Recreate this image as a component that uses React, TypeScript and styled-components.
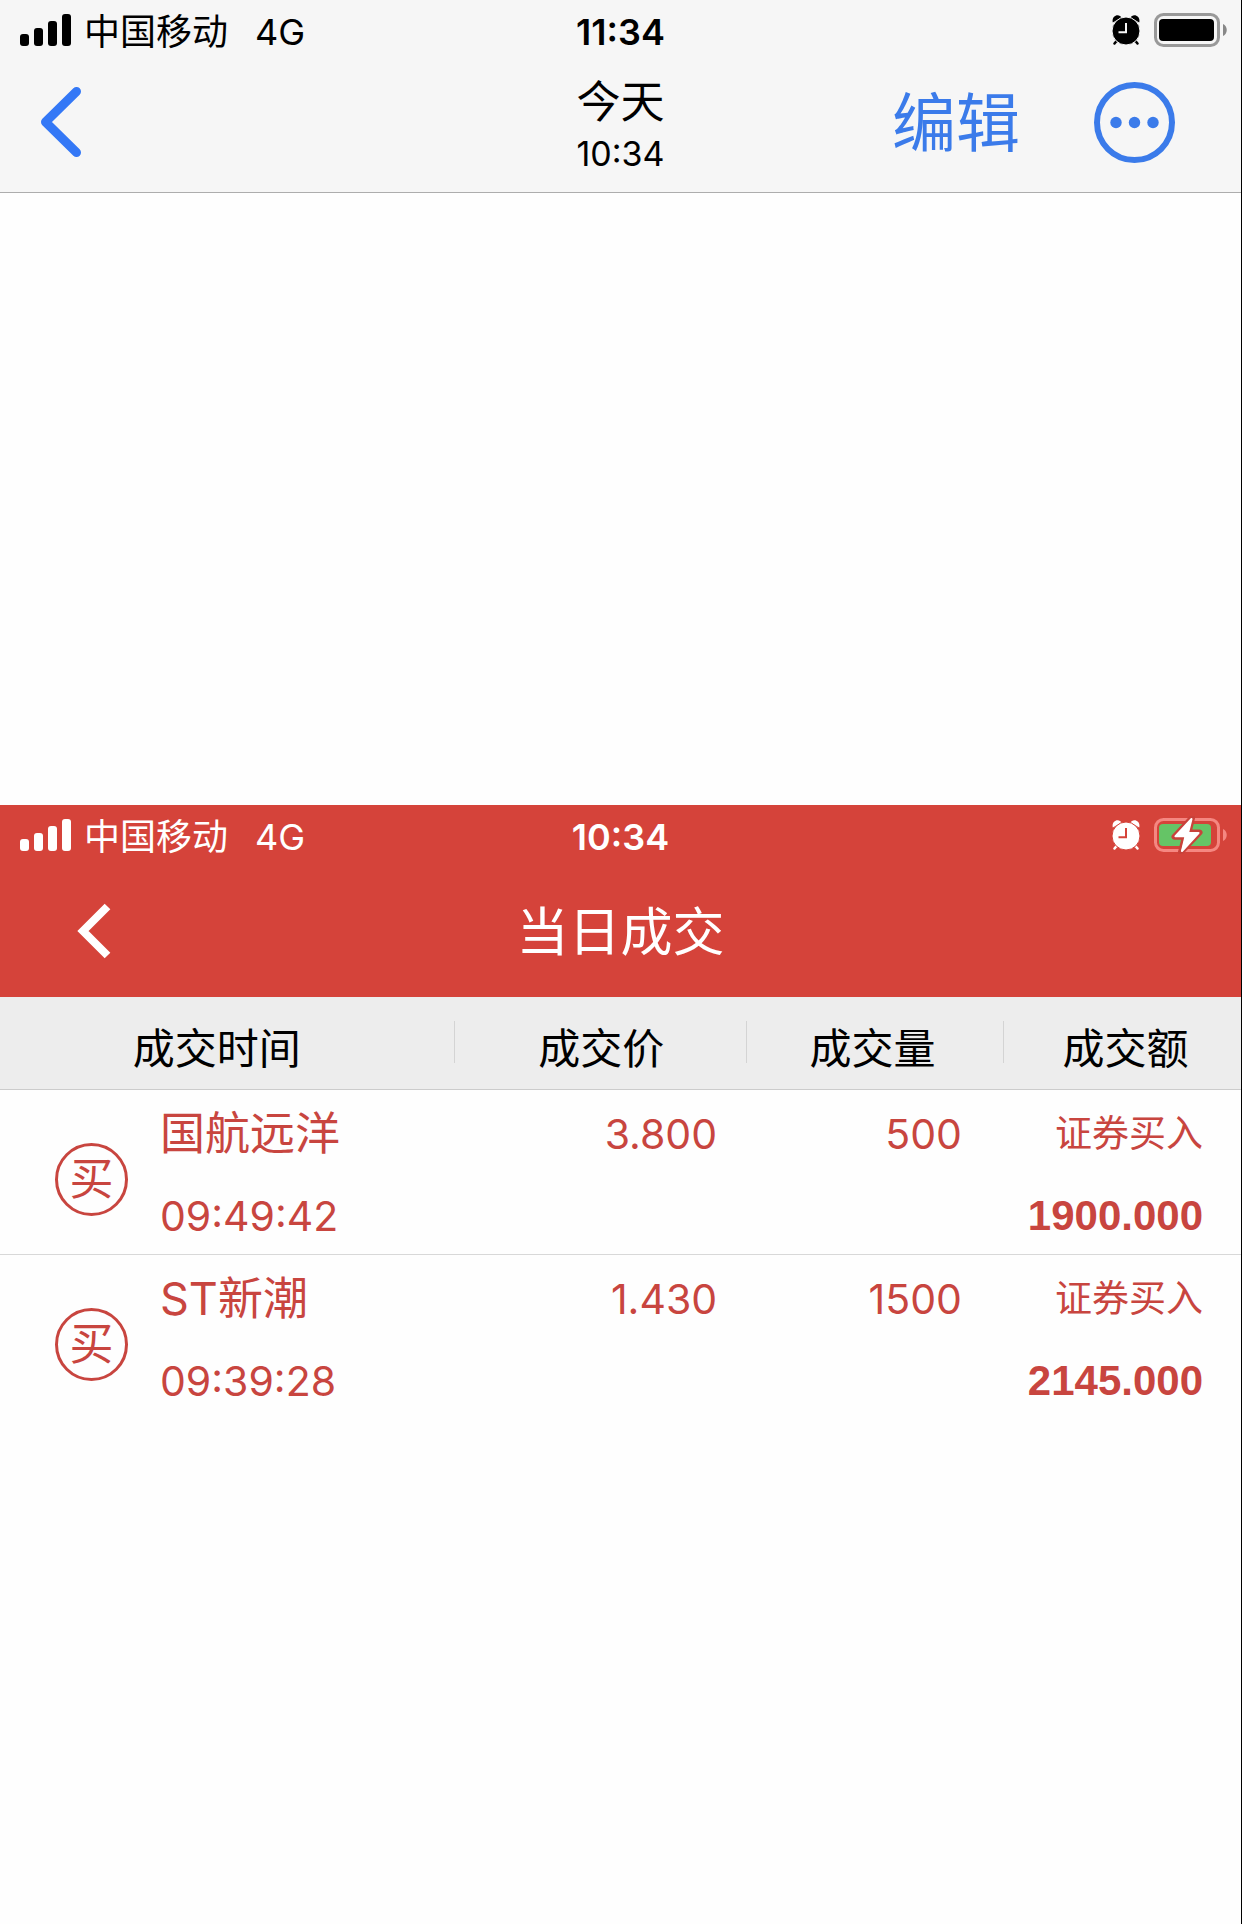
import React from "react";
import styled, { createGlobalStyle } from "styled-components";

const GlobalStyle = createGlobalStyle`
  *, *::before, *::after { box-sizing: border-box; }
  body {
    margin: 0;
    background: #fefefe;
    color: #000;
    font-family: Inter, "Noto Sans CJK SC", sans-serif;
  }
  h1, h2, p { margin: 0; font-weight: 400; }
`;

const Page = styled.main`
  min-height: 100vh;
  border-right: 1px solid #000;
`;

const TopSection = styled.header<{ $tone: "light" | "red" }>`
  display: flex;
  flex-direction: column;
  background: ${(p) => (p.$tone === "red" ? "#d5433a" : "#f6f6f6")};
  color: ${(p) => (p.$tone === "red" ? "#fff" : "#000")};
  border-bottom: ${(p) => (p.$tone === "red" ? "0" : "1px solid #adadad")};
`;

const StatusRow = styled.div`
  display: grid;
  grid-template-columns: 1fr auto 1fr;
  align-items: center;
  height: 60px;
  font-size: 36px;
  line-height: 56px;
`;

const Carrier = styled.div`
  display: flex;
  align-items: center;
  gap: 12px;
  padding-left: 19px;
`;

const StatusText = styled.span`
  padding-top: 4px;
`;

const Network = styled(StatusText)`
  margin-left: 15px;
`;

const Clock = styled(StatusText)`
  font-weight: 600;
`;

const StatusIcons = styled.div`
  display: flex;
  align-items: center;
  justify-content: flex-end;
  gap: 14px;
  padding-right: 13px;
`;

const NavRow = styled.nav<{ $bottom: number }>`
  display: grid;
  grid-template-columns: 1fr auto 1fr;
  align-items: center;
  height: 132px;
  padding-bottom: ${(p) => p.$bottom}px;
`;

const IconButton = styled.button`
  display: flex;
  padding: 0;
  border: 0;
  background: none;
  color: inherit;
  cursor: pointer;
`;

const BackButton = styled(IconButton)<{ $inset: number }>`
  justify-self: start;
  margin-left: ${(p) => p.$inset}px;
`;

const BlueButton = styled(IconButton)`
  color: #3b7bea;
`;

const NoteTitle = styled.h1`
  display: flex;
  flex-direction: column;
  align-items: center;
  padding-top: 8px;
  font-size: 44px;
  line-height: 56px;
`;

const NoteTime = styled.time`
  font-size: 34px;
  line-height: 48px;
`;

const NavActions = styled.div`
  display: flex;
  align-items: center;
  justify-content: flex-end;
  gap: 74px;
  padding-right: 66px;
`;

const EditButton = styled(BlueButton)`
  padding-top: 2px;
  font: inherit;
  font-size: 64px;
  line-height: 80px;
`;

const NoteSpace = styled.section`
  height: 612px;
`;

const ScreenTitle = styled.h2`
  padding-top: 4px;
  font-size: 52px;
  line-height: 80px;
`;

const Trades = styled.table`
  width: 100%;
  table-layout: fixed;
  border-collapse: separate;
  border-spacing: 0;
`;

const HeadCell = styled.th<{ $width: string; $last?: boolean; $pad?: string }>`
  width: ${(p) => p.$width};
  height: 93px;
  padding: ${(p) => p.$pad ?? "12px 0 0"};
  border-bottom: 1px solid #ccc;
  background: #ededed
    ${(p) =>
      p.$last
        ? ""
        : "linear-gradient(#d4d4d4, #d4d4d4) right 24px / 1px 42px no-repeat"};
  font-size: 42px;
  font-weight: 400;
  line-height: 60px;
`;

const TradeRow = styled.tr`
  color: #c8453f;
  &:not(:last-child) td { border-bottom: 1px solid #d8d8d8; }
`;

const Cell = styled.td<{ $right: number }>`
  height: 165px;
  padding: 9px ${(p) => p.$right}px 0 0;
  vertical-align: top;
  text-align: right;
  font-size: 41px;
  line-height: 70px;
`;

const StockCell = styled(Cell)`
  text-align: left;
`;

const Stock = styled.div`
  display: flex;
  align-items: center;
  gap: 32px;
  padding-left: 55px;
`;

const Lines = styled.div`
  display: flex;
  flex-direction: column;
  gap: 12px;
`;

const Badge = styled.span`
  flex: none;
  display: flex;
  align-items: center;
  justify-content: center;
  width: 73px;
  height: 73px;
  margin-top: 8px;
  border: 3px solid currentColor;
  border-radius: 50%;
  font-size: 44px;
  line-height: 60px;
`;

const StockName = styled.div`
  font-size: 45px;
`;

const Kind = styled.div`
  font-size: 37px;
`;

const Amount = styled.div`
  font-family: "Liberation Sans", Arial, sans-serif;
  font-size: 42px;
  font-weight: 700;
`;

const SignalIcon = () => (
  <svg width="53" height="34" viewBox="0 0 53 34" fill="currentColor" aria-hidden="true">
    <rect x="1" y="21" width="9" height="12" rx="3" />
    <rect x="15" y="15" width="9" height="18" rx="3" />
    <rect x="29" y="8" width="9" height="25" rx="3" />
    <rect x="43" y="1" width="9" height="32" rx="3" />
  </svg>
);

const AlarmIcon = ({ hand }: { hand: string }) => (
  <svg width="28" height="30" viewBox="0 0 28 30" aria-hidden="true">
    <path d="M5 25.500 2.500 28.500M23 25.500 25.500 28.500" stroke="currentColor" strokeWidth="2.500" strokeLinecap="round" />
    <g fill="currentColor">
      <path d="M.8 7.500C-.3 3.500 2.500.3 5.500.3 7.500.3 8.800 1.300 9.200 2.500Z" />
      <path d="M27.200 7.500C28.300 3.500 25.500.3 22.500.3 20.500.3 19.200 1.300 18.800 2.500Z" />
      <circle cx="14" cy="16" r="14" stroke={hand} strokeWidth="1" />
    </g>
    <path d="M14 8V17.200H6.500" fill="none" stroke={hand} strokeWidth="2" />
  </svg>
);

const Battery = () => (
  <svg width="74" height="38" viewBox="0 0 74 38" aria-label="电池">
    <rect x="1.500" y="3.500" width="63" height="31" rx="8" fill="none" stroke="#999" strokeWidth="3" />
    <path d="M69 13c5 2 5 10 0 12Z" fill="#888" />
    <rect x="5" y="8" width="55" height="22" rx="4" fill="#000" />
  </svg>
);

const ChargingBattery = () => (
  <svg width="74" height="38" viewBox="0 0 74 38" aria-label="正在充电">
    <rect x="1.500" y="3.500" width="63" height="31" rx="8" fill="none" stroke="#f58781" strokeWidth="3" />
    <path d="M69 13c5 2 5 10 0 12Z" fill="#f58781" />
    <rect x="5" y="8" width="52" height="22" rx="4" fill="#65c466" />
    <path
      d="M38 2 20.500 20.800H31L27 36 45.500 16.500H34.500Z"
      fill="#fff"
      stroke="#c9423a"
      strokeWidth="6"
      strokeLinejoin="round"
      paintOrder="stroke"
    />
    <path d="M37.500 3 21.500 20.300H31.500L28 35 44.500 17H34Z" fill="#fff" stroke="#fff" strokeWidth="2" strokeLinejoin="round" />
  </svg>
);

const RoundChevron = () => (
  <svg width="42" height="72" viewBox="0 0 42 72" fill="none" aria-hidden="true">
    <path d="M36.500 5.500 5.500 36 36.500 66.500" stroke="#3478f6" strokeWidth="9" strokeLinecap="round" strokeLinejoin="round" />
  </svg>
);

const SharpChevron = () => (
  <svg width="34" height="56" viewBox="0 0 34 56" fill="none" aria-hidden="true">
    <path d="M30.500 3.500 6 28 30.500 52.500" stroke="currentColor" strokeWidth="8" />
  </svg>
);

const MoreIcon = () => (
  <svg width="81" height="81" viewBox="0 0 81 81" fill="currentColor" aria-hidden="true">
    <circle cx="40.500" cy="40.500" r="37.500" fill="none" stroke="currentColor" strokeWidth="6" />
    <circle cx="22" cy="40.500" r="5.700" />
    <circle cx="40.500" cy="40.500" r="5.700" />
    <circle cx="59" cy="40.500" r="5.700" />
  </svg>
);

type StatusProps = { time: string; hand: string; charging?: boolean };

const StatusBar = ({ time, hand, charging }: StatusProps) => (
  <StatusRow>
    <Carrier>
      <SignalIcon />
      <StatusText>中国移动</StatusText>
      <Network>4G</Network>
    </Carrier>
    <Clock as="time">{time}</Clock>
    <StatusIcons>
      <AlarmIcon hand={hand} />
      {charging ? <ChargingBattery /> : <Battery />}
    </StatusIcons>
  </StatusRow>
);

const trades = [
  { name: "国航远洋", time: "09:49:42", price: "3.800", volume: "500", kind: "证券买入", amount: "1900.000" },
  { name: "ST新潮", time: "09:39:28", price: "1.430", volume: "1500", kind: "证券买入", amount: "2145.000" },
];

export default function App() {
  return (
    <Page>
      <GlobalStyle />
      <TopSection $tone="light">
        <StatusBar time="11:34" hand="#f6f6f6" />
        <NavRow $bottom={8}>
          <BackButton $inset={40} aria-label="返回">
            <RoundChevron />
          </BackButton>
          <NoteTitle>
            今天
            <NoteTime>10:34</NoteTime>
          </NoteTitle>
          <NavActions>
            <EditButton>编辑</EditButton>
            <BlueButton aria-label="更多">
              <MoreIcon />
            </BlueButton>
          </NavActions>
        </NavRow>
      </TopSection>
      <NoteSpace />
      <TopSection $tone="red">
        <StatusBar time="10:34" hand="#d5433a" charging />
        <NavRow $bottom={0}>
          <BackButton $inset={77} aria-label="返回">
            <SharpChevron />
          </BackButton>
          <ScreenTitle>当日成交</ScreenTitle>
        </NavRow>
      </TopSection>
      <Trades>
        <thead>
          <tr>
            <HeadCell $width="36.7%" $pad="12px 22px 0 0">成交时间</HeadCell>
            <HeadCell $width="23.5%">成交价</HeadCell>
            <HeadCell $width="20.7%" $pad="12px 6px 0 0">成交量</HeadCell>
            <HeadCell $width="19.1%" $pad="12px 0 0 6px" $last>成交额</HeadCell>
          </tr>
        </thead>
        <tbody>
          {trades.map((t) => (
            <TradeRow key={t.time}>
              <StockCell $right={0}>
                <Stock>
                  <Badge>买</Badge>
                  <Lines>
                    <StockName>{t.name}</StockName>
                    <div>{t.time}</div>
                  </Lines>
                </Stock>
              </StockCell>
              <Cell $right={30}>{t.price}</Cell>
              <Cell $right={42}>{t.volume}</Cell>
              <Cell $right={38}>
                <Lines>
                  <Kind>{t.kind}</Kind>
                  <Amount>{t.amount}</Amount>
                </Lines>
              </Cell>
            </TradeRow>
          ))}
        </tbody>
      </Trades>
    </Page>
  );
}
